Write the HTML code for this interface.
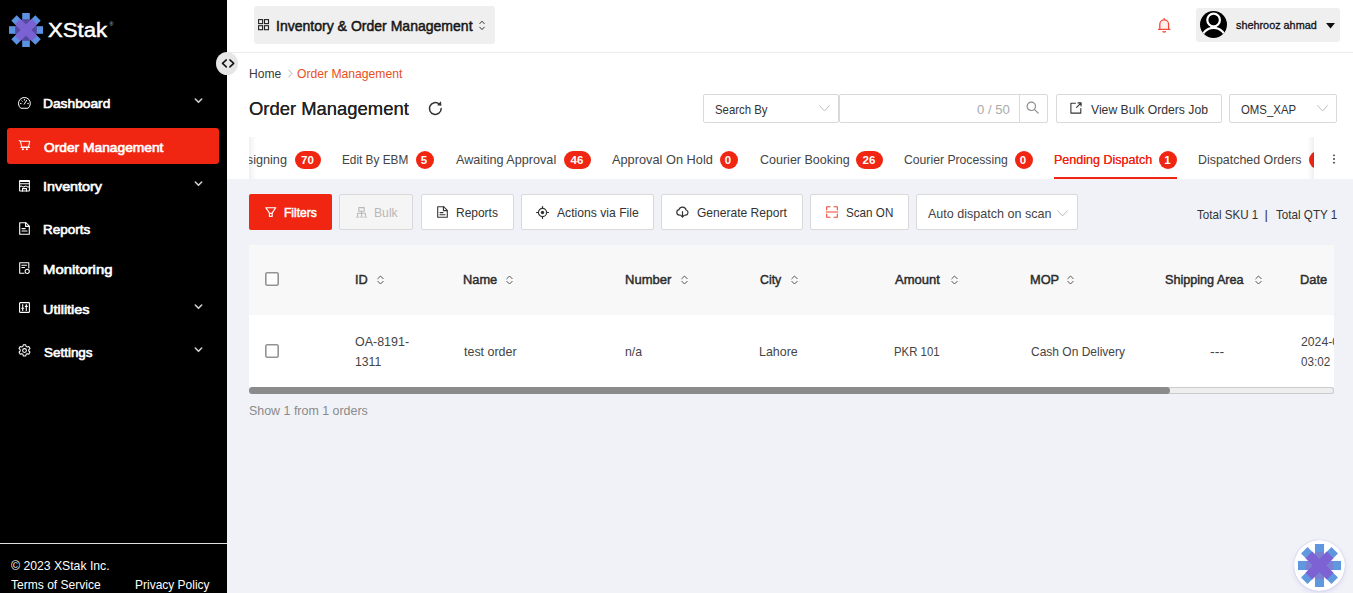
<!DOCTYPE html>
<html lang="en"><head><meta charset="utf-8"><title>Order Management</title>
<style>
*{box-sizing:border-box;margin:0;padding:0}
html,body{width:1353px;height:593px;overflow:hidden}
body{font-family:"Liberation Sans",sans-serif;font-size:13px;color:#333;background:#f0f2f7;position:relative}
.a{position:absolute}
.t{position:absolute;white-space:nowrap;line-height:1;transform-origin:0 0}
svg{position:absolute;overflow:visible}
#side{position:absolute;left:0;top:0;width:227px;height:593px;background:#000}
#act{position:absolute;left:7px;top:128px;width:212px;height:36px;background:#f02613;border-radius:3px}
#footline{position:absolute;left:0;top:543px;width:227px;height:1px;background:#e0e0e0}
#top{position:absolute;left:227px;top:0;width:1126px;height:52px;background:#fff}
#topline{position:absolute;left:227px;top:52px;width:1126px;height:1px;background:#ececec}
#main{position:absolute;left:227px;top:53px;width:1126px;height:126px;background:#fff}
.box{position:absolute;background:#fff;border:1px solid #d9d9d9;border-radius:2px}
.bt{box-shadow:0 2px 0 rgba(0,0,0,.015)}
.badge{position:absolute;top:151px;height:18px;border-radius:9px;background:#f02613;color:#fff;font-size:11.5px;font-weight:bold;line-height:18px;text-align:center;letter-spacing:0;text-indent:-1px}
.cb{position:absolute;left:265px;width:14px;height:14px;border:1.5px solid #8c8c8c;border-radius:2px;background:#fff}
.st{fill:none;stroke-linecap:round;stroke-linejoin:round}
</style></head><body>

<!-- ===== sidebar ===== -->
<div id="side"></div>
<svg style="left:9px;top:13px" width="34" height="34" viewBox="-17 -17 34 34">
 <g fill="#5b93e0"><rect x="-3.8" y="-17" width="7.6" height="34"/><rect x="-17" y="-3.8" width="34" height="7.6"/><rect x="-3.8" y="-17" width="7.6" height="34" transform="rotate(45)"/><rect x="-3.8" y="-17" width="7.6" height="34" transform="rotate(-45)"/></g>
 <g fill="#54489f"><rect x="-3.8" y="-10.8" width="7.6" height="21.6"/><rect x="-10.8" y="-3.8" width="21.6" height="7.6"/></g>
 <g fill="#7b62d3"><rect x="-3.9" y="-11.9" width="7.8" height="23.8" transform="rotate(45)"/><rect x="-3.9" y="-11.9" width="7.8" height="23.8" transform="rotate(-45)"/></g>
</svg>
<span class="t" style="left:109.4px;top:22.3px;font-size:5px;color:#ccc">®</span>
<div id="act"></div>
<div id="footline"></div>

<!-- menu icons -->
<svg style="left:18px;top:96.500px" width="13" height="12" viewBox="0 0 13 12"><g class="st" stroke="#fff" stroke-width="1"><path d="M2.430 11A6 6 0 1 1 10.370 11Z"/><path d="M6.200 7.200L8.600 3.400"/><path d="M2.400 6.600h.7M6.400 2.300v.8M9.700 6.600h.7M3.700 3.800l.5.500"/></g></svg>
<svg style="left:19px;top:140px" width="11" height="11" viewBox="0 0 11 11"><g class="st" stroke="#fff" stroke-width="1.050"><path d="M.2 .5L1.400 1.200H10.700L9.600 7H2.800L1.400 1.200M1.900 7.400H10.500"/></g><circle cx="3.850" cy="9.200" r="1.050" fill="#fff"/><circle cx="7.850" cy="9.200" r="1.050" fill="#fff"/></svg>
<svg style="left:19px;top:179.600px" width="11" height="12" viewBox="0 0 11 12"><g class="st" stroke="#fff" stroke-width="1.050"><rect x=".6" y=".6" width="9.800" height="10.400" rx=".5"/><path d="M.6 1.300H10.400" stroke-width="1.600"/><path d="M.6 3.700H10.400M.8 6.600Q2.200 5.400 3.100 6.500T5.500 6.500 7.900 6.500 10.200 6.600M3.500 11V8.600H7.500V11"/></g></svg>
<svg style="left:19px;top:222px" width="11" height="13" viewBox="0 0 11 13"><g class="st" stroke="#fff" stroke-width="1.1"><path d="M.7 .7H6.8L10.3 4.2V12.3H.7Z"/><path d="M6.6 .9V4.4H10.1M3 6.6H6.2M3 9H8"/></g></svg>
<svg style="left:19px;top:262px" width="11" height="12" viewBox="0 0 11 12"><g class="st" stroke="#fff" stroke-width="1.050"><path d="M5 11.200H.7V.7H9.800V6"/><path d="M2.800 3.200H7.600M2.800 5.400H5.600"/><circle cx="8.200" cy="9.300" r="2.100"/></g></svg>
<svg style="left:19px;top:302px" width="11" height="11" viewBox="0 0 11 11"><g class="st" stroke="#fff" stroke-width="1.1"><rect x=".6" y=".6" width="9.8" height="9.8" rx=".6"/><path d="M3.7 2.6V8.4M7.3 2.6V8.4M2.7 6.3H4.7M6.3 4.4H8.3"/></g></svg>
<svg style="left:18px;top:344px" width="13" height="13" viewBox="0 0 13 13"><g class="st" stroke="#fff" stroke-width="1.05"><path d="M5.3 .8h2.4l.4 1.6 1.1.6 1.6-.5 1.2 2.1-1.2 1.1v1.3l1.2 1.1-1.2 2.1-1.6-.5-1.1.6-.4 1.6H5.3l-.4-1.6-1.1-.6-1.6.5L1 8.1l1.2-1.1V5.700L1 4.600l1.200-2.100 1.600.500 1.100-.600Z"/><circle cx="6.500" cy="6.500" r="1.900"/></g></svg>
<!-- chevrons -->
<svg style="left:194px;top:98px" width="9" height="6" viewBox="0 0 9 6"><path class="st" stroke="#d0d0d0" stroke-width="1.600" d="M1.300 1L4.500 4.300 7.700 1"/></svg>
<svg style="left:194px;top:181px" width="9" height="6" viewBox="0 0 9 6"><path class="st" stroke="#d0d0d0" stroke-width="1.600" d="M1.300 1L4.500 4.300 7.700 1"/></svg>
<svg style="left:194px;top:304px" width="9" height="6" viewBox="0 0 9 6"><path class="st" stroke="#d0d0d0" stroke-width="1.600" d="M1.300 1L4.500 4.300 7.700 1"/></svg>
<svg style="left:194px;top:347px" width="9" height="6" viewBox="0 0 9 6"><path class="st" stroke="#d0d0d0" stroke-width="1.600" d="M1.300 1L4.500 4.300 7.700 1"/></svg>

<!-- ===== top bar ===== -->
<div id="top"></div><div id="topline"></div>
<div class="a" style="left:254px;top:6px;width:241px;height:38px;background:#efefef;border-radius:3px"></div>
<svg style="left:257.800px;top:19.100px" width="12" height="12" viewBox="0 0 12 12"><g fill="none" stroke="#222" stroke-width="1.100"><rect x=".6" y=".6" width="4" height="4"/><rect x="6.500" y=".6" width="4" height="4"/><rect x=".6" y="6.700" width="4" height="4"/><rect x="6.500" y="6.700" width="4" height="4"/></g></svg>
<svg style="left:479px;top:19.600px" width="6" height="11" viewBox="0 0 6 11"><path class="st" stroke="#333" stroke-width="1" d="M.8 3.600L3 1.200 5.200 3.600M.8 7.200L3 9.600 5.200 7.200"/></svg>
<svg style="left:1158px;top:17px" width="13" height="16" viewBox="0 0 13 16"><path d="M1.800 12.300V7.300A4.400 4.400 0 0 1 10.600 7.300V12.300Z" fill="#ffefed"/><g class="st" stroke="#f5483b" stroke-width="1.300"><path d="M.5 12.300H11.900M1.800 12.300V7.300A4.400 4.400 0 0 1 10.600 7.300V12.300M6.200 2.800V1.400M4.900 14.700Q6.200 15.300 7.500 14.700"/></g></svg>
<div class="a" style="left:1196px;top:8px;width:144px;height:34px;background:#efefef;border-radius:3px"></div>
<svg style="left:1200px;top:10.700px" width="27" height="27" viewBox="0 0 27 27"><defs><clipPath id="av"><circle cx="13.500" cy="13.500" r="13.500"/></clipPath></defs><circle cx="13.500" cy="13.500" r="13.500" fill="#000"/><g clip-path="url(#av)" fill="none" stroke="#fff" stroke-width="2.200"><circle cx="13.600" cy="9" r="6.300"/><circle cx="13.600" cy="29.400" r="12.500"/></g></svg>
<svg style="left:1326px;top:22.500px" width="9" height="6" viewBox="0 0 9 6"><path d="M0 0H9L4.500 5.600Z" fill="#111"/></svg>

<!-- ===== main header ===== -->
<div id="main"></div>
<svg style="left:288px;top:69px" width="5" height="9" viewBox="0 0 5 9"><path class="st" stroke="#b5b5b5" stroke-width="1" d="M.8 1L4 4.500 .8 8"/></svg>
<svg style="left:428px;top:101.300px" width="15" height="15" viewBox="0 0 15 15"><path class="st" stroke="#333" stroke-width="1.500" d="M13.200 7.500A5.900 5.900 0 1 1 11.200 3.100"/><path d="M9 4.300L13.400 4.700 13 .3Z" fill="#333"/></svg>
<!-- collapse -->
<div class="a" style="left:216px;top:52px;width:22px;height:23px;border-radius:50%;background:#e6e6e6"></div>
<svg style="left:221px;top:59px" width="14" height="9" viewBox="0 0 14 9"><path class="st" stroke="#111" stroke-width="1.500" stroke-linecap="butt" stroke-linejoin="miter" d="M5.300 .9L1.500 4.400 5.300 7.900M8.900 .9L12.700 4.400 8.900 7.900"/></svg>

<!-- search row -->
<div class="box" style="left:703px;top:94px;width:136px;height:29px"></div>
<svg style="left:819px;top:105px" width="11" height="7" viewBox="0 0 11 7"><path class="st" stroke="#bfbfbf" stroke-width="1" d="M.6 .6L5.500 6 10.400 .6"/></svg>
<div class="box" style="left:839px;top:94px;width:209px;height:29px"></div>
<div class="a" style="left:1019px;top:95px;width:1px;height:27px;background:#d9d9d9"></div>
<svg style="left:1026.300px;top:101.100px" width="13" height="13" viewBox="0 0 13 13"><g class="st" stroke="#8c8c8c" stroke-width="1.200"><circle cx="5.300" cy="5.300" r="4.200"/><path d="M8.400 8.400L12.200 12.200"/></g></svg>
<div class="box" style="left:1056px;top:94px;width:166px;height:29px"></div>
<svg style="left:1070px;top:102px" width="12" height="12" viewBox="0 0 12 12"><g class="st" stroke="#333" stroke-width="1.100" stroke-linecap="butt"><path d="M5.400 1.200H.9V11.100H10.800V6.600"/><path d="M8 .9H11.100V4M11.100 .9L6.600 5.400"/></g></svg>
<div class="box" style="left:1229px;top:94px;width:108px;height:29px"></div>
<svg style="left:1317px;top:105px" width="11" height="7" viewBox="0 0 11 7"><path class="st" stroke="#bfbfbf" stroke-width="1" d="M.6 .6L5.500 6 10.400 .6"/></svg>

<!-- ===== tabs ===== -->
<div class="a" style="left:249px;top:137px;width:40px;height:42px;overflow:hidden"><span class="t" style="left:-16.700px;top:16px;font-size:13px;color:#444;transform:scaleX(.975)">Assigning</span></div>
<div class="a" style="left:249px;top:137px;width:7px;height:42px;background:linear-gradient(90deg,rgba(0,0,0,.06),rgba(0,0,0,0))"></div>
<div class="badge" style="left:295px;width:26px">70</div>
<div class="badge" style="left:415.500px;width:18px">5</div>
<div class="badge" style="left:564px;width:27px">46</div>
<div class="badge" style="left:719.500px;width:18px">0</div>
<div class="badge" style="left:856px;width:27px">26</div>
<div class="badge" style="left:1014.500px;width:18px">0</div>
<div class="badge" style="left:1159px;width:18px">1</div>
<div class="a" style="left:1309px;top:151px;width:5px;height:18px;overflow:hidden"><div class="badge" style="left:0;top:0;width:18px"></div></div>
<div class="a" style="left:1054px;top:177px;width:123px;height:2px;background:#f02613"></div>
<div class="a" style="left:1307px;top:137px;width:7px;height:42px;background:linear-gradient(270deg,rgba(0,0,0,.06),rgba(0,0,0,0))"></div>
<svg style="left:1332px;top:154.400px" width="4" height="10" viewBox="0 0 4 10"><g fill="#333"><circle cx="2" cy="1.300" r=".9"/><circle cx="2" cy="5" r=".9"/><circle cx="2" cy="8.700" r=".9"/></g></svg>

<!-- ===== buttons ===== -->
<div class="a" style="left:249px;top:194px;width:83px;height:36px;background:#f02613;border-radius:2px"></div>
<svg style="left:264.600px;top:207.200px" width="12" height="10" viewBox="0 0 12 10"><path class="st" stroke="#fff" stroke-width="1.150" d="M.8 .7H10.800L6.900 6.300H4.700ZM4.400 6.500H7.200V9.300H4.400Z"/></svg>
<div class="box" style="left:339px;top:194px;width:74px;height:36px;background:#f5f5f5"></div>
<svg style="left:356px;top:207px" width="11" height="11" viewBox="0 0 11 11"><g class="st" stroke="#b8b8b8" stroke-width="1.100" stroke-linecap="butt"><rect x="2.800" y=".6" width="5.400" height="3.600"/><path d="M5.500 4.200V6.300M1.600 8.400V6.300H9.400V8.400M5.500 6.300V8.400M.4 10H2.800M4.300 10H6.700M8.200 10H10.600"/></g></svg>
<div class="box" style="left:421px;top:194px;width:93px;height:36px"></div>
<svg style="left:437px;top:206px" width="11" height="12" viewBox="0 0 11 12"><g class="st" stroke="#333" stroke-width="1.100"><path d="M.7 .7H6.600L10.300 4.400V11.300H.7Z"/><path d="M6.400 .9V4.600H10.100M3 6.600H6M3 8.800H8"/></g></svg>
<div class="box" style="left:521px;top:194px;width:133px;height:36px"></div>
<svg style="left:536px;top:206px" width="13" height="13" viewBox="0 0 13 13"><g class="st" stroke="#333" stroke-width="1.200"><circle cx="6.500" cy="6.500" r="4.100"/><path d="M6.500 .5V2.400M6.500 10.600V12.500M.5 6.500H2.400M10.600 6.500H12.500"/></g><circle cx="6.500" cy="6.500" r="1.700" fill="#333"/></svg>
<div class="box" style="left:661px;top:194px;width:142px;height:36px"></div>
<svg style="left:676px;top:206px" width="13" height="12" viewBox="0 0 13 12"><g class="st" stroke="#333" stroke-width="1.200"><path d="M4 9.200H3.400A2.800 2.800 0 0 1 2.900 3.700 3.800 3.800 0 0 1 10.200 4 2.700 2.700 0 0 1 9.800 9.200H9"/><path d="M6.500 5.600V11M4.800 9.300L6.500 11 8.200 9.300"/></g></svg>
<div class="box" style="left:810px;top:194px;width:99px;height:36px"></div>
<svg style="left:825.500px;top:206px" width="12" height="12" viewBox="0 0 12 12"><g class="st" stroke="#f2452f" stroke-width="1.050" stroke-linecap="butt"><path d="M.7 4V.7H4M8 .7H11.300V4M11.300 8V11.300H8M4 11.300H.7V8M.3 6H11.700"/></g></svg>
<div class="box" style="left:916px;top:194px;width:162px;height:36px"></div>
<svg style="left:1057px;top:209.500px" width="11" height="7" viewBox="0 0 11 7"><path class="st" stroke="#bfbfbf" stroke-width="1" d="M.6 .6L5.500 6 10.400 .6"/></svg>

<!-- ===== table ===== -->
<div class="a" style="left:249px;top:245px;width:1085px;height:70px;background:#f8f8f8"></div>
<div class="a" style="left:249px;top:315px;width:1085px;height:72px;background:#fff"></div>
<svg style="left:265px;top:272px" width="14" height="14" viewBox="0 0 14 14"><rect x=".8" y=".8" width="12.400" height="12.400" rx="1.400" fill="#fff" stroke="#939393" stroke-width="1.600"/></svg>
<svg style="left:265px;top:344px" width="14" height="14" viewBox="0 0 14 14"><rect x=".8" y=".8" width="12.400" height="12.400" rx="1.400" fill="#fff" stroke="#939393" stroke-width="1.600"/></svg>
<div class="a" style="left:1300.500px;top:335px;width:33.500px;height:14px;overflow:hidden"><span class="t" style="left:0;top:0;font-size:13px;color:#444;transform:scaleX(.94)">2024-03-21</span></div>
<svg style="left:376.8px;top:274.600px" width="7" height="10" viewBox="0 0 7 10"><path class="st" stroke="#555" stroke-width="1" d="M.8 3.700L3.500 1 6.200 3.700M.8 6.300L3.500 9 6.200 6.300"/></svg>
<svg style="left:506.0px;top:274.600px" width="7" height="10" viewBox="0 0 7 10"><path class="st" stroke="#555" stroke-width="1" d="M.8 3.700L3.500 1 6.200 3.700M.8 6.300L3.500 9 6.200 6.300"/></svg>
<svg style="left:681.0px;top:274.600px" width="7" height="10" viewBox="0 0 7 10"><path class="st" stroke="#555" stroke-width="1" d="M.8 3.700L3.500 1 6.200 3.700M.8 6.300L3.500 9 6.200 6.300"/></svg>
<svg style="left:791.0px;top:274.600px" width="7" height="10" viewBox="0 0 7 10"><path class="st" stroke="#555" stroke-width="1" d="M.8 3.700L3.500 1 6.200 3.700M.8 6.300L3.500 9 6.200 6.300"/></svg>
<svg style="left:950.6px;top:274.600px" width="7" height="10" viewBox="0 0 7 10"><path class="st" stroke="#555" stroke-width="1" d="M.8 3.700L3.500 1 6.200 3.700M.8 6.300L3.500 9 6.200 6.300"/></svg>
<svg style="left:1067.0px;top:274.600px" width="7" height="10" viewBox="0 0 7 10"><path class="st" stroke="#555" stroke-width="1" d="M.8 3.700L3.500 1 6.200 3.700M.8 6.300L3.500 9 6.200 6.300"/></svg>
<svg style="left:1254.5px;top:274.600px" width="7" height="10" viewBox="0 0 7 10"><path class="st" stroke="#555" stroke-width="1" d="M.8 3.700L3.500 1 6.200 3.700M.8 6.300L3.500 9 6.200 6.300"/></svg>

<div class="a" style="left:249px;top:387px;width:1085px;height:7px;border-radius:4px;background:#eee;box-shadow:inset 0 1px 0 #cbcbcb,inset 0 -1px 0 #cbcbcb,inset -1px 0 0 #cbcbcb"></div>
<div class="a" style="left:249px;top:387px;width:921px;height:7px;border-radius:4px;background:#8b8b8b"></div>

<!-- FAB -->
<div class="a" style="left:1294px;top:540px;width:51px;height:51px;border-radius:26px;background:#fff;box-shadow:0 2px 5px rgba(90,70,200,.13),0 0 1px rgba(90,70,200,.45)"></div>
<svg style="left:1298px;top:543.500px" width="43" height="43" viewBox="-17 -17 34 34">
 <g fill="#6098e0"><rect x="-3.600" y="-17" width="7.200" height="34"/><rect x="-17" y="-3.600" width="34" height="7.200"/><rect x="-3.600" y="-17" width="7.200" height="34" transform="rotate(45)"/><rect x="-3.600" y="-17" width="7.200" height="34" transform="rotate(-45)"/></g>
 <g fill="#7b80d2"><rect x="-3.600" y="-10.800" width="7.200" height="21.600"/><rect x="-10.800" y="-3.600" width="21.600" height="7.200"/></g>
 <g fill="#7c62d2"><rect x="-3.700" y="-11.900" width="7.400" height="23.800" transform="rotate(45)"/><rect x="-3.700" y="-11.900" width="7.400" height="23.800" transform="rotate(-45)"/></g>
</svg>

<!-- ===== text ===== -->
<span class="t" style="left:47.50px;top:20px;font-size:20px;font-weight:normal;color:#fff;transform:scaleX(1.1084);-webkit-text-stroke:.45px #fff;">XStak</span>
<span class="t" style="left:43.18px;top:97px;font-size:13.5px;font-weight:normal;color:#fff;transform:scaleX(1.0196);-webkit-text-stroke:.65px #fff;">Dashboard</span>
<span class="t" style="left:44.20px;top:141px;font-size:13.5px;font-weight:normal;color:#fff;transform:scaleX(1.0204);-webkit-text-stroke:.65px #fff;">Order Management</span>
<span class="t" style="left:43.14px;top:180px;font-size:13.5px;font-weight:normal;color:#fff;transform:scaleX(1.0624);-webkit-text-stroke:.65px #fff;">Inventory</span>
<span class="t" style="left:43.20px;top:223px;font-size:13.5px;font-weight:normal;color:#fff;transform:scaleX(0.9996);-webkit-text-stroke:.65px #fff;">Reports</span>
<span class="t" style="left:43.10px;top:263px;font-size:13.5px;font-weight:normal;color:#fff;transform:scaleX(1.1020);-webkit-text-stroke:.65px #fff;">Monitoring</span>
<span class="t" style="left:43.13px;top:303px;font-size:13.5px;font-weight:normal;color:#fff;transform:scaleX(1.0712);-webkit-text-stroke:.65px #fff;">Utilities</span>
<span class="t" style="left:44.20px;top:346px;font-size:13.5px;font-weight:normal;color:#fff;transform:scaleX(0.9953);-webkit-text-stroke:.65px #fff;">Settings</span>
<span class="t" style="left:10.50px;top:559px;font-size:13px;font-weight:normal;color:#fff;transform:scaleX(0.9391);">© 2023 XStak Inc.</span>
<span class="t" style="left:10.50px;top:578px;font-size:13px;font-weight:normal;color:#fff;transform:scaleX(0.9268);">Terms of Service</span>
<span class="t" style="left:134.78px;top:578px;font-size:13px;font-weight:normal;color:#fff;transform:scaleX(0.9216);">Privacy Policy</span>
<span class="t" style="left:276.06px;top:18px;font-size:15px;font-weight:normal;color:#151515;transform:scaleX(0.9355);-webkit-text-stroke:.5px #151515;">Inventory &amp; Order Management</span>
<span class="t" style="left:1235.60px;top:20px;font-size:11px;font-weight:normal;color:#111;transform:scaleX(0.9850);-webkit-text-stroke:.3px #111;">shehrooz ahmad</span>
<span class="t" style="left:248.77px;top:67px;font-size:13px;font-weight:normal;color:#3a3a3a;transform:scaleX(0.9283);">Home</span>
<span class="t" style="left:297.00px;top:67px;font-size:13px;font-weight:normal;color:#e8501c;transform:scaleX(0.9349);">Order Management</span>
<span class="t" style="left:249.00px;top:99px;font-size:19px;font-weight:normal;color:#222;transform:scaleX(0.9700);text-shadow:0 0 .4px #222;">Order Management</span>
<span class="t" style="left:714.50px;top:103px;font-size:13px;font-weight:normal;color:#333;transform:scaleX(0.8764);">Search By</span>
<span class="t" style="left:977.00px;top:103px;font-size:13px;font-weight:normal;color:#aaa;transform:scaleX(1.0063);">0 / 50</span>
<span class="t" style="left:1091.00px;top:103px;font-size:13px;font-weight:normal;color:#333;transform:scaleX(0.9375);">View Bulk Orders Job</span>
<span class="t" style="left:1240.75px;top:103px;font-size:13px;font-weight:normal;color:#333;transform:scaleX(0.8764);">OMS_XAP</span>
<span class="t" style="left:342.29px;top:153px;font-size:13px;font-weight:normal;color:#444;transform:scaleX(0.9081);">Edit By EBM</span>
<span class="t" style="left:455.50px;top:153px;font-size:13px;font-weight:normal;color:#444;transform:scaleX(0.9718);">Awaiting Approval</span>
<span class="t" style="left:611.90px;top:153px;font-size:13px;font-weight:normal;color:#444;transform:scaleX(0.9826);">Approval On Hold</span>
<span class="t" style="left:759.50px;top:153px;font-size:13px;font-weight:normal;color:#444;transform:scaleX(0.9625);">Courier Booking</span>
<span class="t" style="left:904.00px;top:153px;font-size:13px;font-weight:normal;color:#444;transform:scaleX(0.9382);">Courier Processing</span>
<span class="t" style="left:1053.54px;top:153px;font-size:13px;font-weight:normal;color:#f02613;transform:scaleX(0.9636);text-shadow:0 0 .3px #f02613;">Pending Dispatch</span>
<span class="t" style="left:1197.80px;top:153px;font-size:13px;font-weight:normal;color:#444;transform:scaleX(0.9548);">Dispatched Orders</span>
<span class="t" style="left:283.61px;top:206px;font-size:13.5px;font-weight:normal;color:#fff;transform:scaleX(0.8917);-webkit-text-stroke:.55px #fff;">Filters</span>
<span class="t" style="left:373.86px;top:206px;font-size:13px;font-weight:normal;color:#b8b8b8;transform:scaleX(0.9359);">Bulk</span>
<span class="t" style="left:455.68px;top:206px;font-size:13px;font-weight:normal;color:#333;transform:scaleX(0.9196);">Reports</span>
<span class="t" style="left:556.75px;top:206px;font-size:13px;font-weight:normal;color:#333;transform:scaleX(0.9347);">Actions via File</span>
<span class="t" style="left:696.60px;top:206px;font-size:13px;font-weight:normal;color:#333;transform:scaleX(0.9267);">Generate Report</span>
<span class="t" style="left:846.20px;top:206px;font-size:13px;font-weight:normal;color:#333;transform:scaleX(0.8977);">Scan ON</span>
<span class="t" style="left:927.70px;top:207px;font-size:13px;font-weight:normal;color:#444;transform:scaleX(0.9656);">Auto dispatch on scan</span>
<span class="t" style="left:1197.00px;top:208px;font-size:13px;font-weight:normal;color:#333;transform:scaleX(0.8916);">Total SKU 1</span>
<span class="t" style="left:1264.50px;top:208px;font-size:13px;font-weight:normal;color:#333;transform:scaleX(1.0000);">|</span>
<span class="t" style="left:1275.50px;top:208px;font-size:13px;font-weight:normal;color:#333;transform:scaleX(0.8954);">Total QTY 1</span>
<span class="t" style="left:354.82px;top:273px;font-size:13px;font-weight:normal;color:#2b2b2b;transform:scaleX(0.9818);-webkit-text-stroke:.45px #2b2b2b;">ID</span>
<span class="t" style="left:462.76px;top:273px;font-size:13px;font-weight:normal;color:#2b2b2b;transform:scaleX(0.9866);-webkit-text-stroke:.45px #2b2b2b;">Name</span>
<span class="t" style="left:624.75px;top:273px;font-size:13px;font-weight:normal;color:#2b2b2b;transform:scaleX(1.0020);-webkit-text-stroke:.45px #2b2b2b;">Number</span>
<span class="t" style="left:760.00px;top:273px;font-size:13px;font-weight:normal;color:#2b2b2b;transform:scaleX(0.9481);-webkit-text-stroke:.45px #2b2b2b;">City</span>
<span class="t" style="left:895.30px;top:273px;font-size:13px;font-weight:normal;color:#2b2b2b;transform:scaleX(1.0024);-webkit-text-stroke:.45px #2b2b2b;">Amount</span>
<span class="t" style="left:1029.52px;top:273px;font-size:13px;font-weight:normal;color:#2b2b2b;transform:scaleX(0.9842);-webkit-text-stroke:.45px #2b2b2b;">MOP</span>
<span class="t" style="left:1165.00px;top:273px;font-size:13px;font-weight:normal;color:#2b2b2b;transform:scaleX(0.9704);-webkit-text-stroke:.45px #2b2b2b;">Shipping Area</span>
<span class="t" style="left:1299.76px;top:273px;font-size:13px;font-weight:normal;color:#2b2b2b;transform:scaleX(0.9912);-webkit-text-stroke:.45px #2b2b2b;">Date</span>
<span class="t" style="left:355.25px;top:335px;font-size:13px;font-weight:normal;color:#444;transform:scaleX(0.9593);">OA-8191-</span>
<span class="t" style="left:355.25px;top:355px;font-size:13px;font-weight:normal;color:#444;transform:scaleX(0.9378);">1311</span>
<span class="t" style="left:463.75px;top:345px;font-size:13px;font-weight:normal;color:#444;transform:scaleX(0.9580);">test order</span>
<span class="t" style="left:625.30px;top:345px;font-size:13px;font-weight:normal;color:#444;transform:scaleX(0.9447);">n/a</span>
<span class="t" style="left:759.04px;top:345px;font-size:13px;font-weight:normal;color:#444;transform:scaleX(0.9554);">Lahore</span>
<span class="t" style="left:894.42px;top:345px;font-size:13px;font-weight:normal;color:#444;transform:scaleX(0.8760);">PKR 101</span>
<span class="t" style="left:1030.50px;top:345px;font-size:13px;font-weight:normal;color:#444;transform:scaleX(0.9231);">Cash On Delivery</span>
<span class="t" style="left:1209.50px;top:345px;font-size:13px;font-weight:normal;color:#444;transform:scaleX(1.0863);">---</span>
<span class="t" style="left:1300.50px;top:355px;font-size:13px;font-weight:normal;color:#444;transform:scaleX(0.8978);">03:02</span>
<span class="t" style="left:249.00px;top:404px;font-size:13px;font-weight:normal;color:#8a8a8a;transform:scaleX(0.9557);">Show 1 from 1 orders</span>
</body></html>
